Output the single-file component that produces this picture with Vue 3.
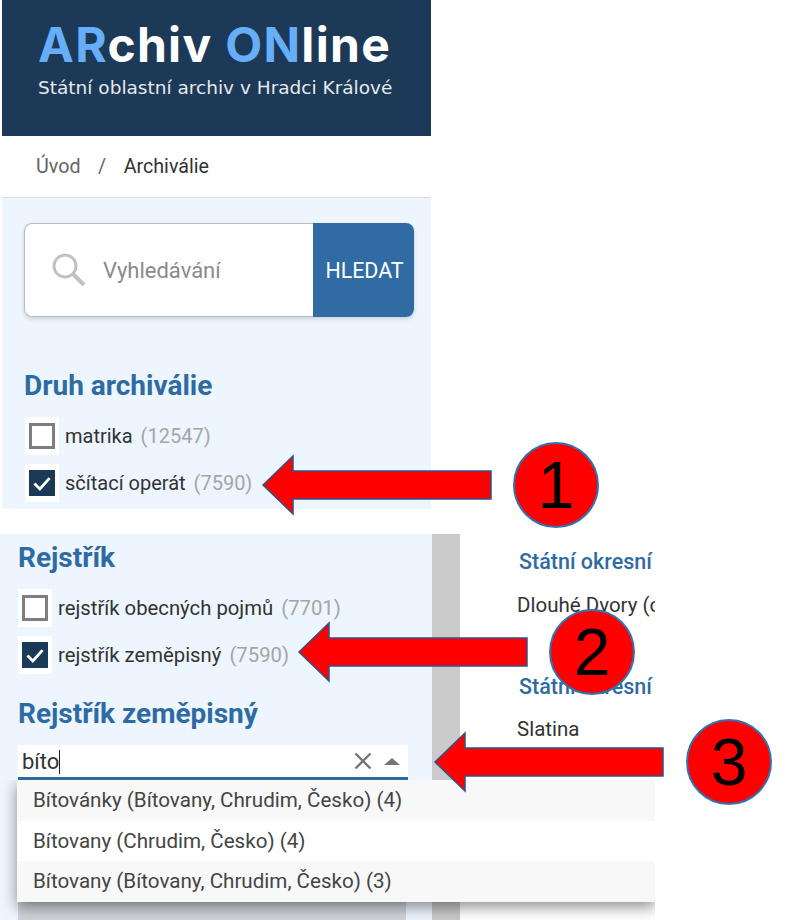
<script setup>
const options = [
  'Bítovánky (Bítovany, Chrudim, Česko) (4)',
  'Bítovany (Chrudim, Česko) (4)',
  'Bítovany (Bítovany, Chrudim, Česko) (3)'
]
const callouts = [
  { n: 1, cls: 'one' },
  { n: 2, cls: 'two' },
  { n: 3, cls: 'three' }
]
</script>

<template>
  <div class="page">
    <section class="top">
      <header class="brand">
        <div class="logo"><b>AR</b>chiv <b>ON</b>line</div>
        <div class="sub">Státní oblastní archiv v Hradci Králové</div>
      </header>
      <nav class="crumbs">
        <span>Úvod</span><i>/</i><span class="now">Archiválie</span>
      </nav>
      <div class="panel">
        <div class="search">
          <div class="field">
            <svg width="36" height="36" viewBox="0 0 36 36" fill="none" stroke="#c2c2c2">
              <circle cx="14" cy="14" r="11" stroke-width="3" />
              <path d="M22 22l11 11" stroke-width="4" />
            </svg>
            <span>Vyhledávání</span>
          </div>
          <button class="go">HLEDAT</button>
        </div>
        <h2 class="first">Druh archiválie</h2>
        <label class="check"><span class="box"></span>matrika <em>(12547)</em></label>
        <label class="check"><span class="box on">
          <svg viewBox="0 0 24 24" width="26" height="26"><path d="M5 12.500l5 5 9-10" fill="none" stroke="#fff" stroke-width="2.600" /></svg>
        </span>sčítací operát <em>(7590)</em></label>
      </div>
    </section>

    <section class="bottom">
      <div class="side">
        <h2>Rejstřík</h2>
        <label class="check"><span class="box"></span>rejstřík obecných pojmů <em>(7701)</em></label>
        <label class="check"><span class="box on">
          <svg viewBox="0 0 24 24" width="26" height="26"><path d="M5 12.500l5 5 9-10" fill="none" stroke="#fff" stroke-width="2.600" /></svg>
        </span>rejstřík zeměpisný <em>(7590)</em></label>
        <h2 class="geo">Rejstřík zeměpisný</h2>
        <div class="combo">
          <span class="typed">bíto</span>
          <svg class="clear" width="18" height="18" viewBox="0 0 18 18"><path d="M1.500 1.500l15 15M16.500 1.500l-15 15" stroke="#757575" stroke-width="2.400" /></svg>
          <span class="caret"></span>
        </div>
        <div class="under"></div>
      </div>
      <div class="scroll"></div>
      <div class="content">
        <h3>Státní okresní</h3>
        <p>Dlouhé Dvory (o</p>
        <h3 class="next">Státní okresní</h3>
        <p>Slatina</p>
      </div>
      <ul class="menu">
        <li v-for="o in options" :key="o">{{ o }}</li>
      </ul>
    </section>

    <div v-for="c in callouts" :key="c.n" class="callout" :class="c.cls">
      <svg class="arrow" width="232" height="92" viewBox="0 0 232 92">
        <path d="M2 46L32 17V32H230V60H32V75Z" fill="#ff0000" stroke="#2f528f" stroke-width="1.500" />
      </svg>
      <div class="badge">{{ c.n }}</div>
    </div>
  </div>
</template>

<style scoped>
.page {
  position: relative;
  width: 788px;
  height: 920px;
  overflow: hidden;
  background: #fff;
  font-family: Roboto, "Liberation Sans", sans-serif;
  color: #333;
}
.top {
  width: 429px;
  margin-left: 2px;
}
.brand {
  height: 136px;
  box-sizing: border-box;
  padding: 18px 0 0 36px;
  background: #1c3a57;
  color: #fff;
}
.logo {
  font-family: Inter, sans-serif;
  font-size: 48px;
  font-weight: 700;
  line-height: 54px;
  letter-spacing: 1.300px;
}
.logo b {
  color: #66aef8;
  font-weight: 700;
}
.sub {
  font-family: "DejaVu Sans", sans-serif;
  font-size: 18.500px;
  line-height: 20px;
  margin-top: 6px;
  white-space: nowrap;
  color: #e6e9ec;
}
.crumbs {
  height: 62px;
  box-sizing: border-box;
  border-bottom: 1px solid #dcdcdc;
  padding: 18px 0 0 34px;
  font-size: 19.700px;
  line-height: 26px;
  color: #666;
}
.crumbs i {
  font-style: normal;
  margin: 0 17.500px;
}
.crumbs .now {
  color: #333;
}
.panel {
  height: 311px;
  box-sizing: border-box;
  padding-top: 25px;
  background: #edf5fe;
}
.search {
  display: flex;
  width: 390px;
  height: 94px;
  margin-left: 22px;
  border-radius: 8px;
  box-shadow: 0 2px 4px rgba(0, 0, 0, .15);
}
.field {
  flex: 1;
  display: flex;
  align-items: center;
  gap: 16px;
  padding-left: 26px;
  background: #fff;
  border: 1px solid #bbb;
  border-right: 0;
  border-radius: 8px 0 0 8px;
  font-size: 22px;
  color: #8a8a8a;
}
.go {
  width: 101px;
  border: 0;
  padding: 0 0 0 2px;
  background: #306ca3;
  color: #fff;
  border-radius: 0 8px 8px 0;
  font-family: inherit;
  font-size: 21.400px;
}
h2 {
  margin: 0;
  font-size: 28px;
  font-weight: 700;
  line-height: 30px;
  color: #2f6ba3;
}
.first {
  margin: 54px 0 11px 22px;
}
.panel .check {
  margin-left: 23px;
}
.check {
  display: flex;
  align-items: center;
  height: 47px;
  font-size: 20px;
  color: #333;
  white-space: pre;
}
.check em {
  margin-left: 3px;
  font-style: normal;
  color: #a5a5a5;
}
.box {
  width: 34px;
  height: 38px;
  margin-right: 6px;
  background: #fff;
  display: flex;
  align-items: center;
  justify-content: center;
  position: relative;
}
.box::after {
  content: "";
  width: 26px;
  height: 26px;
  box-sizing: border-box;
  border: 3px solid #7f7f7f;
}
.box.on::after {
  background: #1c3a57;
  border-color: #1c3a57;
}
.box svg {
  position: absolute;
  left: 4px;
  top: 6px;
  z-index: 1;
}
.bottom {
  position: relative;
  display: flex;
  height: 386px;
  margin-top: 25px;
}
.side {
  width: 432px;
  box-sizing: border-box;
  padding: 9px 0 0 18px;
  background: #edf5fe;
}
.side h2 {
  margin-bottom: 11px;
}
.side .check {
  margin-left: 0;
  font-size: 20.300px;
}
.side .geo {
  margin: 21px 0 16px;
}
.combo {
  display: flex;
  align-items: center;
  width: 390px;
  height: 35px;
  box-sizing: border-box;
  padding: 0 8px 0 4px;
  background: #fff;
  border-bottom: 3px solid #2f6ba3;
  font-size: 22px;
  color: #333;
}
.typed {
  flex: 1;
}
.typed::after {
  content: "";
  display: inline-block;
  width: 1px;
  height: 24px;
  background: #222;
  vertical-align: -5px;
}
.clear {
  margin-right: 12px;
}
.caret {
  border: 8px solid transparent;
  border-top: 0;
  border-bottom: 7px solid #757575;
}
.under {
  width: 388px;
  height: 30px;
  margin-top: 113px;
  background: #cfd3d8;
  border-radius: 10px 10px 0 0;
}
.scroll {
  width: 28px;
  background: #cacaca;
}
.content {
  width: 195px;
  padding: 16px 0 0 59px;
  box-sizing: border-box;
  overflow: hidden;
  white-space: nowrap;
  font-size: 20.500px;
  color: #333;
}
h3 {
  margin: 0;
  font-size: 21.500px;
  line-height: 24px;
  font-weight: 500;
  color: #2f6ba3;
}
.content p {
  margin: 18px 0 0 -2px;
  line-height: 26px;
}
.content .next {
  margin: 57px 0 -1px;
}
.menu {
  position: absolute;
  left: 17px;
  top: 246px;
  width: 638px;
  margin: 0;
  padding: 0;
  list-style: none;
  background: #fff;
  box-shadow: 0 5px 14px rgba(0, 0, 0, .45);
  font-size: 20.600px;
  color: #444;
  clip-path: inset(0 0 -20px -20px);
}
.menu li {
  height: 40.500px;
  line-height: 40.500px;
  padding-left: 16px;
}
.menu li:nth-child(odd) {
  background: #f8f8f8;
}
.callout {
  position: absolute;
  display: flex;
  align-items: center;
}
.arrow {
  display: block;
}
.badge {
  width: 86px;
  height: 86px;
  margin-left: 20px;
  box-sizing: border-box;
  border: 2px solid #2e75b6;
  border-radius: 50%;
  background: #f00;
  color: #000;
  display: flex;
  align-items: center;
  justify-content: center;
  font-family: "Liberation Sans", sans-serif;
  font-size: 66px;
}
.one {
  left: 261px;
  top: 439px;
}
.two {
  left: 297px;
  top: 606px;
}
.three {
  left: 433px;
  top: 716px;
}
.three .badge {
  margin-left: 21px;
}
</style>
